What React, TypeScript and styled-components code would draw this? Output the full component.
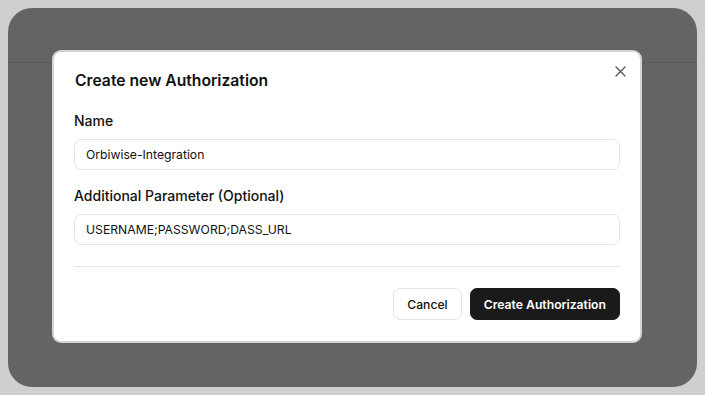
import React from 'react'
import styled, { createGlobalStyle } from 'styled-components'

const GlobalStyle = createGlobalStyle`
  html, body {
    margin: 0;
    padding: 0;
    background: #cfcfcf;
    font-family: Inter, "Noto Sans", "Liberation Sans", sans-serif;
    -webkit-font-smoothing: antialiased;
  }
  * { box-sizing: border-box; }
`

const Frame = styled.div`
  position: relative;
  margin: 8px;
  height: 379px;
  border-radius: 24px;
  background: #646464;
  overflow: hidden;
`

const PageHeader = styled.div`
  height: 55px;
  border-bottom: 1px solid #5a5a5a;
`

const Dialog = styled.div`
  position: absolute;
  left: 44px;
  top: 42px;
  width: 590px;
  height: 293px;
  background: #ffffff;
  border: 2px solid #d4d4d4;
  border-radius: 9px;
  padding: 19px 20px 20px 20px;
  display: flex;
  flex-direction: column;
`

const Title = styled.h2`
  margin: 0 0 0 1px;
  font-size: 15.7px;
  line-height: 20px;
  font-weight: 600;
  color: #111111;
`

const CloseButton = styled.button`
  position: absolute;
  top: 11px;
  right: 12px;
  width: 16px;
  height: 16px;
  padding: 0;
  border: none;
  background: transparent;
  display: flex;
  align-items: center;
  justify-content: center;
  color: #555555;
  cursor: pointer;
`

const Field = styled.div<{ $top: number }>`
  margin-top: ${p => p.$top}px;
  display: flex;
  flex-direction: column;
  gap: 10px;
`

const Label = styled.label`
  font-size: 14px;
  line-height: 16px;
  font-weight: 500;
  color: #111111;
`

const Input = styled.input`
  height: 31px;
  width: 100%;
  border: 1px solid #e4e4e4;
  border-radius: 7px;
  padding: 0 11px;
  font-family: inherit;
  font-size: 12.2px;
  color: #111111;
  background: #fff;
  outline: none;
`

const Divider = styled.hr`
  margin: 21px 0 0 0;
  border: none;
  border-top: 1px solid #e6e6e6;
  height: 0;
`

const Footer = styled.div`
  margin-top: 21px;
  display: flex;
  justify-content: flex-end;
  gap: 8px;
`

const Button = styled.button<{ $primary?: boolean }>`
  height: 32px;
  padding: 0 13px;
  border-radius: 7px;
  font-family: inherit;
  font-size: 12.2px;
  font-weight: ${p => (p.$primary ? 600 : 500)};
  cursor: pointer;
  border: 1px solid ${p => (p.$primary ? '#1a1a1a' : '#e4e4e4')};
  background: ${p => (p.$primary ? '#1a1a1a' : '#ffffff')};
  color: ${p => (p.$primary ? '#ffffff' : '#111111')};
`

export default function App() {
  return (
    <>
      <GlobalStyle />
      <Frame>
        <PageHeader />
        <Dialog role="dialog">
          <Title>Create new Authorization</Title>
          <CloseButton aria-label="Close">
            <svg width="11" height="11" viewBox="0 0 11 11" fill="none" stroke="currentColor" strokeWidth="1.3" strokeLinecap="round">
              <path d="M1 1L10 10M10 1L1 10" />
            </svg>
          </CloseButton>
          <Field $top={22}>
            <Label>Name</Label>
            <Input defaultValue="Orbiwise-Integration" />
          </Field>
          <Field $top={18}>
            <Label>Additional Parameter (Optional)</Label>
            <Input defaultValue="USERNAME;PASSWORD;DASS_URL" />
          </Field>
          <Divider />
          <Footer>
            <Button>Cancel</Button>
            <Button $primary>Create Authorization</Button>
          </Footer>
        </Dialog>
      </Frame>
    </>
  )
}
